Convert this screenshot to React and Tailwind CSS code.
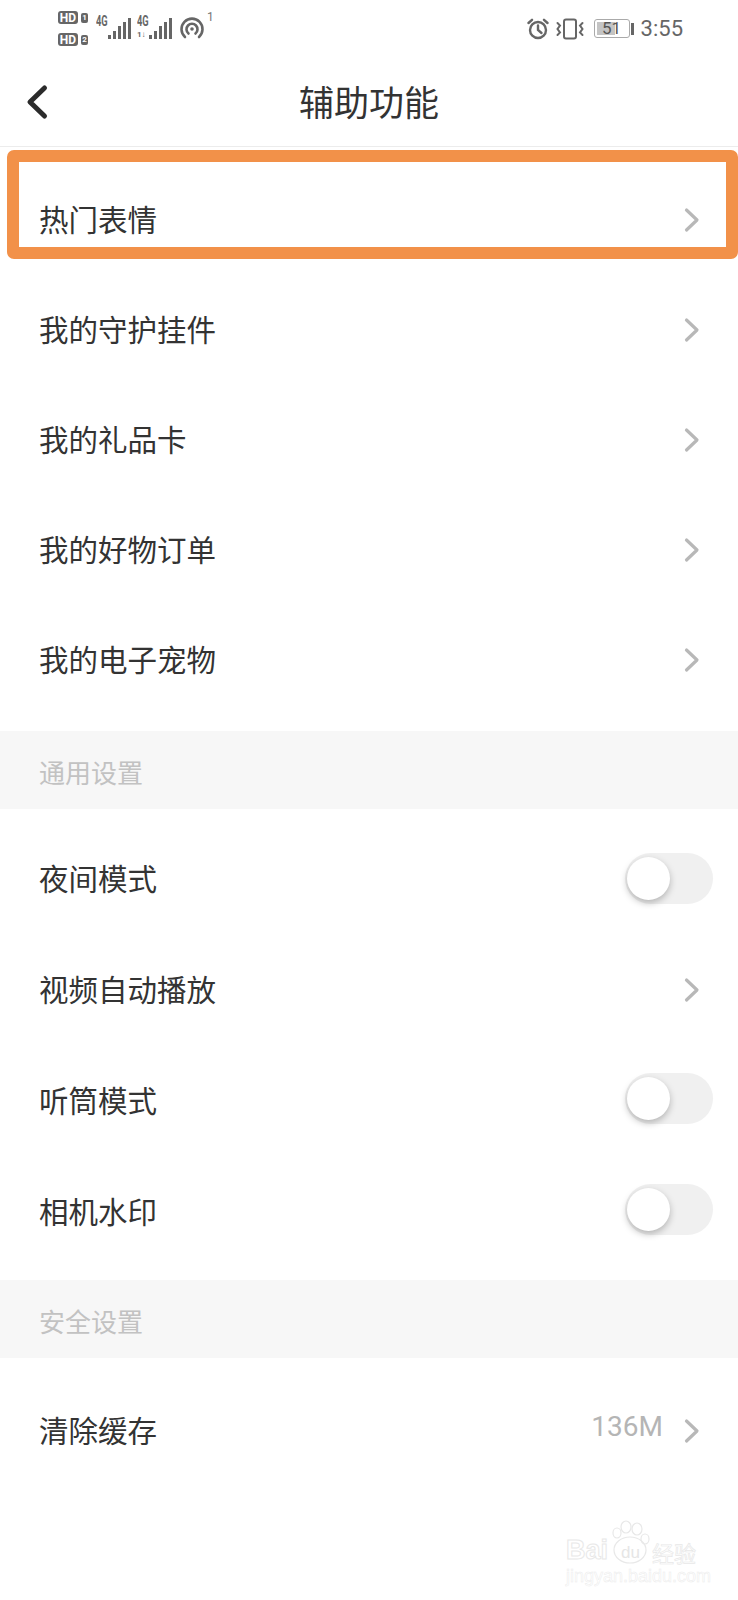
import React from 'react';

const Chevron = () => (
  <svg width="16" height="26" viewBox="0 0 16 26" fill="none" className="shrink-0">
    <path d="M2.5 3 L13 13 L2.5 23" stroke="#b8b8b8" strokeWidth="3.2" strokeLinecap="round" strokeLinejoin="round" />
  </svg>
);

const Toggle = ({ raised }) => (
  <div className={`relative w-[88px] h-[51px] rounded-full bg-[#f0f0f0] ${raised ? 'mb-[4px]' : ''}`}>
    <div className="absolute left-[2px] top-[4px] w-[43px] h-[43px] rounded-full bg-white shadow-[0_3px_7px_rgba(0,0,0,0.25)]" />
  </div>
);

const Row = ({ label, right, height = 'h-[110px]' }) => (
  <div className={`flex items-center justify-between pl-[39px] pr-[25px] ${height}`}>
    <span className="text-[29.5px] leading-none text-[#333333] mb-[2px]">{label}</span>
    {right}
  </div>
);

const ChevronSlot = () => (
  <div className="w-[88px] flex justify-end pr-[13px]">
    <Chevron />
  </div>
);

const Band = ({ label }) => (
  <div className="h-[78px] bg-[#f7f7f7] flex items-center pl-[39px]">
    <span className="text-[26px] leading-none text-[#c2c2c2] mt-[4px]">{label}</span>
  </div>
);

const HdBadge = ({ n }) => (
  <div className="flex items-center gap-[3px]">
    <span className="w-[20px] h-[13px] flex items-center justify-center bg-[#666666] text-white rounded-[3px] text-[12px] leading-none font-bold">HD</span>
    <span className="w-[7px] h-[10px] flex items-center justify-center bg-[#666666] text-white rounded-[2px] text-[8px] leading-none font-bold">{n}</span>
  </div>
);

const Signal = ({ extra }) => (
  <div className="relative w-[36px] h-[30px]">
    <span className="absolute left-0 top-[2px] text-[15px] leading-none font-bold text-[#666666] origin-left scale-x-[0.62]">4G</span>
    {extra && <span className="absolute left-0 bottom-[3px] text-[8px] leading-none font-bold text-[#666666]">1↓</span>}
    <svg width="36" height="30" viewBox="0 0 36 30" className="absolute left-0 top-0">
      <rect x="12" y="23" width="3" height="4" fill="#666666" />
      <rect x="17" y="19" width="3" height="8" fill="#666666" />
      <rect x="22" y="14" width="3" height="13" fill="#666666" />
      <rect x="27" y="10" width="3" height="17" fill="#666666" />
      <rect x="32" y="6" width="3" height="21" fill="#666666" />
    </svg>
  </div>
);

const StatusBar = () => (
  <div className="h-[57px] flex items-center justify-between pl-[58px] pr-[55px] [font-family:Roboto,sans-serif]">
    <div className="flex items-start">
      <div className="flex flex-col gap-[9px] w-[38px]">
        <HdBadge n="1" />
        <HdBadge n="2" />
      </div>
      <div className="flex gap-[5px] mr-[7px] mt-[1px]">
        <Signal />
        <Signal extra />
      </div>
      <svg width="24" height="22" viewBox="0 0 24 22" fill="none" stroke="#666666" strokeWidth="2.6" strokeLinecap="round" className="mt-[6px]">
        <path d="M5 20 A10.5 10.5 0 1 1 19 20" />
        <path d="M8.5 16.5 A5.5 5.5 0 1 1 15.5 16.5" />
        <circle cx="12" cy="12" r="1.8" fill="#666666" stroke="none" />
      </svg>
      <span className="text-[12px] leading-none text-[#777777] ml-[3px]">1</span>
    </div>
    <div className="flex items-center">
      <svg width="22" height="22" viewBox="0 0 22 22" fill="none" stroke="#666666" strokeWidth="2.4" strokeLinecap="round" className="mr-[7px]">
        <circle cx="11" cy="12" r="8" />
        <path d="M11 7.5 V12 L14.5 15" />
        <path d="M1.5 5 L5 1.8 M20.5 5 L17 1.8" />
      </svg>
      <svg width="28" height="22" viewBox="0 0 28 22" fill="none" stroke="#666666" strokeWidth="2" strokeLinecap="round" className="mr-[10px]">
        <rect x="8" y="1.5" width="12" height="19" rx="2" />
        <path d="M1.5 5 L4 7.5 L1.5 11 L4 14.5 L1.5 17" />
        <path d="M26.5 5 L24 7.5 L26.5 11 L24 14.5 L26.5 17" />
      </svg>
      <div className="flex items-center mr-[7px]">
        <div className="relative w-[36px] h-[19px] border border-[#aaaaaa] rounded-[3px] overflow-hidden">
          <div className="absolute left-[2px] top-[2px] bottom-[2px] w-[18px] bg-[#c4c4c4]" />
          <span className="absolute inset-0 flex items-center justify-center text-[17px] leading-none text-[#555555]">51</span>
        </div>
        <div className="w-[3px] h-[12px] bg-[#666666] ml-[1px]" />
      </div>
      <span className="text-[22px] leading-none text-[#666666]">3:55</span>
    </div>
  </div>
);

const App = () => {
  return (
    <div className="relative w-[738px] h-[1600px] overflow-hidden bg-white [font-family:'Noto_Sans_CJK_SC',sans-serif]">
      <StatusBar />

      <div className="relative h-[90px] flex items-center justify-center border-b border-[#ececec]">
        <svg width="26" height="38" viewBox="0 0 26 38" fill="none" className="absolute left-[26px] top-[26px]">
          <path d="M18.5 5 L4 19 L18.5 33" stroke="#2b2b2b" strokeWidth="5" strokeLinecap="round" strokeLinejoin="round" />
        </svg>
        <span className="text-[35px] leading-none text-[#333333] mb-[2px]">辅助功能</span>
      </div>

      <div className="pt-[18px] pb-[16px]">
        <Row label="热门表情" right={<ChevronSlot />} />
        <Row label="我的守护挂件" right={<ChevronSlot />} />
        <Row label="我的礼品卡" right={<ChevronSlot />} />
        <Row label="我的好物订单" right={<ChevronSlot />} />
        <Row label="我的电子宠物" right={<ChevronSlot />} />
      </div>

      <Band label="通用设置" />

      <div className="pt-[14px] pb-[13px]">
        <Row label="夜间模式" right={<Toggle />} height="h-[111px]" />
        <Row label="视频自动播放" right={<ChevronSlot />} height="h-[111px]" />
        <Row label="听筒模式" right={<Toggle raised />} height="h-[111px]" />
        <Row label="相机水印" right={<Toggle raised />} height="h-[111px]" />
      </div>

      <Band label="安全设置" />

      <div className="pt-[18px]">
        <div className="flex items-center justify-between pl-[39px] pr-[38px] h-[110px]">
          <span className="text-[29.5px] leading-none text-[#333333] mb-[2px]">清除缓存</span>
          <div className="flex items-center gap-[21px]">
            <span className="text-[28px] leading-none text-[#b5b5b5] mb-[8px] [font-family:Roboto,sans-serif]">136M</span>
            <Chevron />
          </div>
        </div>
      </div>

      {/* highlight box drawn over the first row */}
      <div className="absolute left-[7px] top-[150px] w-[731px] h-[109px] border-[12px] border-[#f29149] rounded-[7px] pointer-events-none" />

      {/* watermark */}
      <div className="absolute left-[566px] top-[1520px] w-[140px] h-[66px] pointer-events-none">
        <svg width="140" height="46" viewBox="0 0 140 46" fill="none" stroke="#e8e8e8" strokeWidth="1.2" className="absolute left-0 top-0">
          <ellipse cx="51" cy="13" rx="4" ry="5" />
          <ellipse cx="60" cy="7" rx="5" ry="6" />
          <ellipse cx="71" cy="9" rx="5" ry="6" />
          <ellipse cx="79" cy="19" rx="4" ry="5" />
          <ellipse cx="64" cy="30" rx="16" ry="13" />
        </svg>
        <span className="absolute left-0 top-[17px] text-[27px] leading-none font-bold text-transparent [-webkit-text-stroke:1px_#e8e8e8] [font-family:'Liberation_Sans',sans-serif]">Bai</span>
        <span className="absolute left-[55px] top-[24px] text-[17px] leading-none text-[#e6e6e6] [font-family:'Liberation_Sans',sans-serif]">du</span>
        <span className="absolute left-[86px] top-[21px] text-[22px] leading-none text-transparent [-webkit-text-stroke:0.7px_#e8e8e8]">经验</span>
        <span className="absolute left-0 top-[47px] text-[18px] leading-none text-transparent [-webkit-text-stroke:0.5px_#ececec] [font-family:'Liberation_Sans',sans-serif]">jingyan.baidu.com</span>
      </div>
    </div>
  );
};

export default App;
